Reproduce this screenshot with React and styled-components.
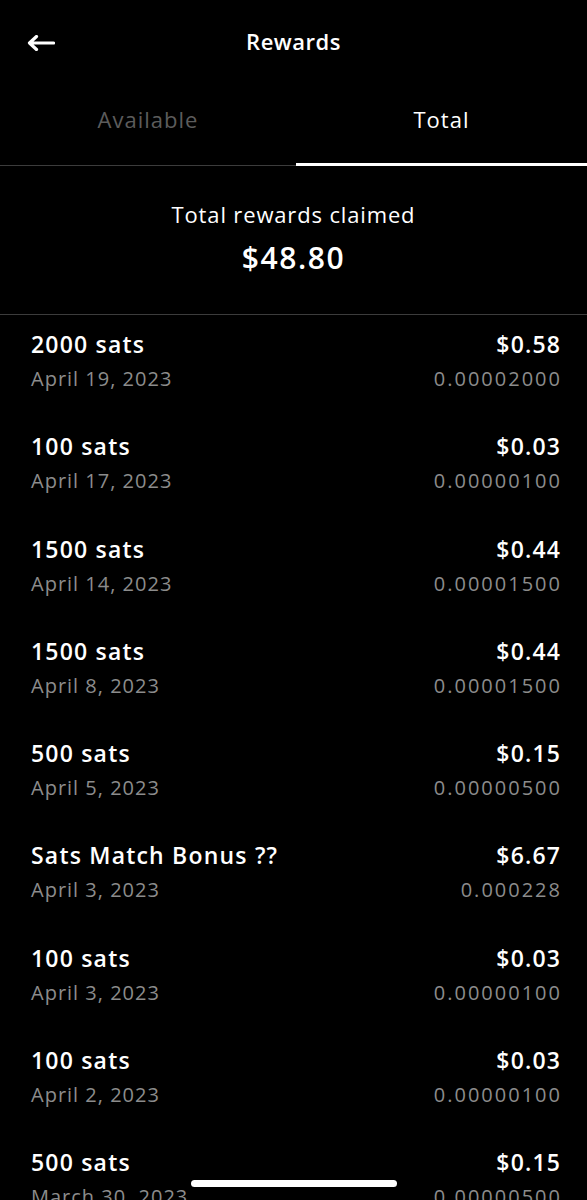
import React from "react";
import styled, { createGlobalStyle } from "styled-components";

const GlobalStyle = createGlobalStyle`
  html, body {
    margin: 0;
    padding: 0;
    background: #000;
    overflow: hidden;
  }
  body {
    font-family: "Open Sans", "Noto Sans", sans-serif;
    color: #fff;
    -webkit-font-smoothing: antialiased;
  }
`;

const rewards = [
  { title: "2000 sats", date: "April 19, 2023", usd: "$0.58", btc: "0.00002000" },
  { title: "100 sats", date: "April 17, 2023", usd: "$0.03", btc: "0.00000100" },
  { title: "1500 sats", date: "April 14, 2023", usd: "$0.44", btc: "0.00001500" },
  { title: "1500 sats", date: "April 8, 2023", usd: "$0.44", btc: "0.00001500" },
  { title: "500 sats", date: "April 5, 2023", usd: "$0.15", btc: "0.00000500" },
  { title: "Sats Match Bonus ??", date: "April 3, 2023", usd: "$6.67", btc: "0.000228" },
  { title: "100 sats", date: "April 3, 2023", usd: "$0.03", btc: "0.00000100" },
  { title: "100 sats", date: "April 2, 2023", usd: "$0.03", btc: "0.00000100" },
  { title: "500 sats", date: "March 30, 2023", usd: "$0.15", btc: "0.00000500" },
];

const App = () => {
  return (
    <>
      <GlobalStyle />
      <Screen>
        <Header>
          <BackButton aria-label="Back">
            <svg width="28" height="16" viewBox="0 0 28 16" fill="none">
              <path
                d="M26.5 8H3M9.5 1.5L2.5 8l7 6.5"
                stroke="#fff"
                strokeWidth="3.2"
                strokeLinecap="round"
                strokeLinejoin="round"
              />
            </svg>
          </BackButton>
          <Title>Rewards</Title>
        </Header>

        <TabBar>
          <Tab>Available</Tab>
          <Tab $active>Total</Tab>
        </TabBar>

        <Summary>
          <SummaryLabel>Total rewards claimed</SummaryLabel>
          <SummaryAmount>$48.80</SummaryAmount>
        </Summary>

        <List>
          {rewards.map((r, i) => (
            <Row key={i}>
              <Line>
                <RowTitle>{r.title}</RowTitle>
                <RowTitle>{r.usd}</RowTitle>
              </Line>
              <Line>
                <RowSub>{r.date}</RowSub>
                <RowSub $num>{r.btc}</RowSub>
              </Line>
            </Row>
          ))}
        </List>

        <HomeIndicator />
      </Screen>
    </>
  );
};

const Screen = styled.div`
  width: 587px;
  min-height: 1200px;
  background: #000;
`;

const Header = styled.div`
  position: relative;
  height: 82px;
  display: flex;
  align-items: center;
  justify-content: center;
`;

const BackButton = styled.button`
  position: absolute;
  left: 27px;
  top: 35px;
  padding: 0;
  border: 0;
  background: none;
  display: flex;
  cursor: pointer;
`;

const Title = styled.div`
  font-size: 22px;
  font-weight: 600;
  letter-spacing: 0.5px;
`;

const TabBar = styled.div`
  display: grid;
  grid-template-columns: 296px 1fr;
  height: 83px;
  border-bottom: 1px solid #3c3c3c;
`;

const Tab = styled.div`
  display: flex;
  align-items: center;
  justify-content: center;
  padding-bottom: 10px;
  font-size: 22px;
  letter-spacing: 1px;
  color: ${(p) => (p.$active ? "#fff" : "#5c5c5c")};
  box-shadow: ${(p) => (p.$active ? "inset 0 -3px 0 #fff" : "none")};
  margin-bottom: ${(p) => (p.$active ? "-1px" : "0")};
`;

const Summary = styled.div`
  display: flex;
  flex-direction: column;
  align-items: center;
  padding: 34px 0 37px;
  border-bottom: 1px solid #3c3c3c;
`;

const SummaryLabel = styled.div`
  font-size: 22px;
  line-height: 28px;
  letter-spacing: 0.85px;
`;

const SummaryAmount = styled.div`
  margin-top: 11px;
  font-size: 30px;
  line-height: 38px;
  font-weight: 600;
  letter-spacing: 1.6px;
`;

const List = styled.div`
  display: flex;
  flex-direction: column;
`;

const Row = styled.div`
  display: flex;
  flex-direction: column;
  gap: 9px;
  padding: 16px 27px 25.25px 31px;
`;

const Line = styled.div`
  display: flex;
  justify-content: space-between;
  align-items: center;
`;

const RowTitle = styled.span`
  font-size: 23px;
  line-height: 26px;
  font-weight: 600;
  letter-spacing: 1.2px;
  margin-right: -1.2px;
  color: #fff;
`;

const RowSub = styled.span`
  font-size: 20px;
  line-height: 26px;
  letter-spacing: ${(p) => (p.$num ? "2px" : "1px")};
  margin-right: ${(p) => (p.$num ? "-2px" : "0")};
  color: #8c8c8c;
`;

const HomeIndicator = styled.div`
  position: fixed;
  left: 191px;
  top: 1180px;
  width: 206px;
  height: 7px;
  border-radius: 4px;
  background: #fff;
`;

export default App;
